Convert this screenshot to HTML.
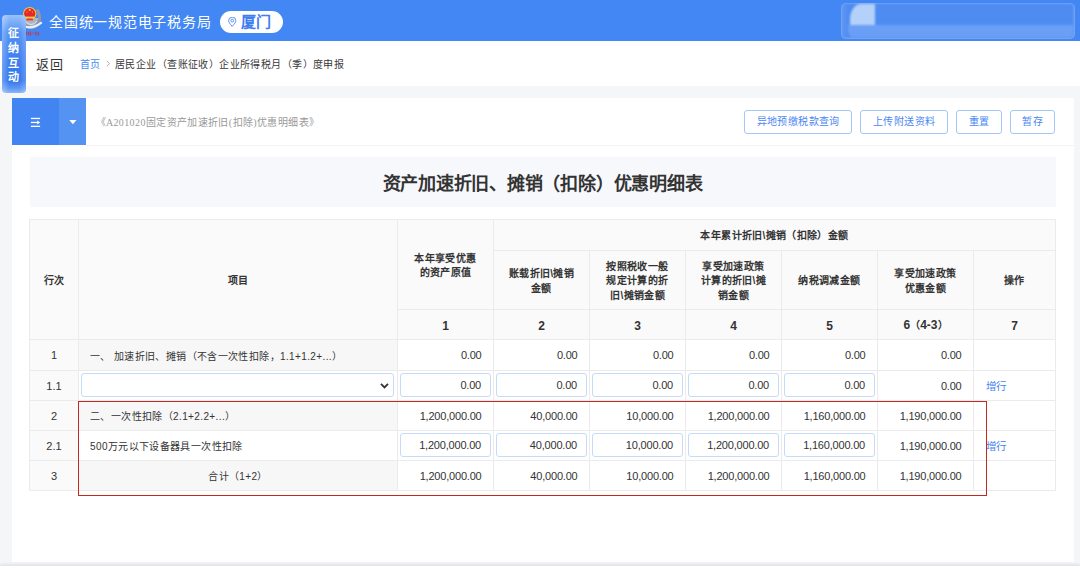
<!DOCTYPE html>
<html lang="zh-CN">
<head>
<meta charset="utf-8">
<style>
*{box-sizing:border-box;margin:0;padding:0}
html,body{width:1080px;height:570px;overflow:hidden}
body{position:relative;background:#f5f6f8;font-family:"Liberation Sans",sans-serif;color:#333}
.abs{position:absolute}
#hdr{left:0;top:0;width:1080px;height:41px;background:#4287f4}
#title{left:49px;top:12px;font-size:14px;letter-spacing:0.75px;line-height:20px;color:#fff;white-space:nowrap}
#pill{left:220px;top:11px;width:63px;height:22px;border-radius:11px;background:#fff}
#pill span{position:absolute;left:21px;top:1px;font-size:15px;line-height:20px;color:#3f7ef0;font-weight:bold}
#blur{left:841px;top:3px;width:234px;height:35.5px;border-radius:5px;background:#5d95f3;overflow:hidden;box-shadow:inset 0 0 2px 1px rgba(150,190,250,.55)}
#blur .in{position:absolute;left:0;top:0;right:0;bottom:0;filter:blur(0.8px)}
#blur .up{position:absolute;left:3px;top:1px;right:2px;height:21px;background:#4f8cf1}
#blur .ls{position:absolute;left:2px;top:2px;width:7px;bottom:2px;background:linear-gradient(90deg,#5d95f3,#4a88f1)}
#blur .lo{position:absolute;left:7px;top:22px;right:2px;height:12px;background:#6a9ff5;border-bottom-left-radius:6px}
#blur .sq{position:absolute;left:9px;top:1px;width:25px;height:21px;background:#b4d1f9;border-top-left-radius:11px 15px}
#bc{left:0;top:41px;width:1080px;height:45px;background:#fff}
#back{left:36px;top:56px;font-size:13px;letter-spacing:0.8px;line-height:18px;color:#333}
#crumb{left:80px;top:57px;font-size:10px;letter-spacing:0.42px;line-height:16px;color:#333;white-space:nowrap}
#crumb .home{color:#4589f3}
#crumb2{left:115px;top:57px;font-size:10px;letter-spacing:0.42px;line-height:16px;color:#3a3a3a;white-space:nowrap}
#badge{left:2px;top:15px;width:24px;height:78px;border-radius:4px;background:linear-gradient(90deg,rgba(255,255,255,.3) 0,rgba(255,255,255,0) 30%,rgba(255,255,255,0) 72%,rgba(255,255,255,.22) 100%),linear-gradient(180deg,#98c2f8 0%,#5291f3 22%,#3f80f0 55%,#3276ee 84%,#5e98f3 94%,#8ab6f6 100%)}
#badge span{position:absolute;left:5.5px;top:11px;width:11px;font-size:11px;line-height:14.8px;color:#fff;font-weight:bold}
#panel{left:12px;top:98px;width:1061.5px;height:464px;background:#fff}
#tabA{left:12px;top:98px;width:47px;height:47px;background:#4284f1}
#tabB{left:59px;top:98px;width:27px;height:47px;background:#5593f3}
#tabline{left:86px;top:145px;width:988px;height:1px;background:#f3f3f3}
#doc{left:95.5px;top:114.5px;font-size:10px;letter-spacing:0.38px;line-height:16px;color:#999;white-space:nowrap;font-family:"Liberation Serif",serif}
.btn{height:23.5px;top:110px;border:1px solid #a6c6f7;border-radius:3px;background:#fff;color:#4a87f2;font-size:10px;letter-spacing:0.4px;text-indent:0.4px;line-height:21.5px;text-align:center;white-space:nowrap}
#ttlbg{left:30px;top:157px;width:1025.5px;height:50px;background:#f7f8fc}
#ttl{left:30px;top:173px;width:1025px;text-align:center;font-size:18px;letter-spacing:-0.235px;line-height:22px;font-weight:bold;color:#333}
#red{left:77.5px;top:400.5px;width:909px;height:95px;border:1.6px solid #c2291f}
#foot{left:0;top:566px;width:1080px;height:4px;background:#fff;box-shadow:0 -1.5px 3px rgba(200,200,218,.55)}
/*TBLCSS*/
.c{position:absolute;border:1px solid #ebebeb;display:flex;align-items:center;justify-content:center}
.th{position:relative;top:1.5px;font-size:10px;letter-spacing:0.35px;line-height:14.5px;font-weight:bold;color:#333;text-align:center;white-space:nowrap}
.thn{font-size:12px;letter-spacing:0;padding-top:3px;top:0}
.rn{font-size:11px;color:#333;line-height:14px}
.num{position:absolute;right:11.5px;top:0;bottom:0;display:flex;align-items:center;font-size:11px;letter-spacing:-0.2px;color:#333;white-space:nowrap}
.inp{position:absolute;left:2px;right:2.5px;top:2px;bottom:3px;border:1px solid #c5dbf8;border-radius:3px;background:#fff}
.inp span{position:absolute;right:8.5px;top:0;bottom:0;display:flex;align-items:center;font-size:11px;letter-spacing:-0.2px;color:#333;white-space:nowrap}
.txt{position:absolute;left:11px;top:0;bottom:0;display:flex;align-items:center;font-size:10px;letter-spacing:0.38px;color:#333;white-space:nowrap}
.txt.ctr{left:0;right:0;justify-content:center}
.sel{position:absolute;left:2px;right:3px;top:2px;bottom:3px;border:1px solid #c5dbf8;border-radius:3px;background:#fff}
.sel svg{position:absolute;right:4.5px;top:9px}
.add{position:absolute;left:12px;top:0;bottom:0;display:flex;align-items:center;font-size:10.5px;color:#3f7ef0}
/*END*/
</style>
</head>
<body>
<div id="hdr" class="abs"></div>
<svg class="abs" style="left:16px;top:2px" width="30" height="38" viewBox="16 2 30 38">
<path d="M22.5 17 Q24 26.5 31 27.5 Q37.5 28 39.5 20 Q40 14 37 9.5" fill="none" stroke="#8f98aa" stroke-width="3"/>
<path d="M23.5 18 Q25.5 25.5 31 26 Q36.5 26 38.6 18 Z" fill="#aeb5c3"/><path d="M25 21 Q28 24.5 31 24.5 Q35 24.5 37 21" fill="none" stroke="#dfe3ea" stroke-width="1"/>
<circle cx="29.7" cy="13.8" r="6.8" fill="#f2c53c"/>
<circle cx="29.7" cy="13.6" r="5.6" fill="#e7262b"/>
<rect x="25.3" y="16.6" width="8.8" height="2" fill="#f5c94c"/>
<rect x="26.3" y="18.8" width="6.8" height="1.6" fill="#e0383a"/>
<circle cx="29.7" cy="10" r="1.1" fill="#f5d050"/>
<circle cx="27" cy="12" r="0.6" fill="#f5d050"/><circle cx="32.4" cy="12" r="0.6" fill="#f5d050"/>
<path d="M25.5 26.8 Q33 29 41.8 22.3" fill="none" stroke="#eef1f7" stroke-width="2.2"/>
<path d="M26.3 31.5 v4 M28 32 l1 3 M30.5 31.5 v4 M32.5 33 h2 M36 31.5 v4 M38 32 q1 2 0.5 3.5" fill="none" stroke="#c93446" stroke-width="1.1"/>
</svg>
<div id="title" class="abs">全国统一规范电子税务局</div>
<div id="pill" class="abs"><svg style="position:absolute;left:8px;top:6px" width="9" height="10" viewBox="0 0 9 10"><path d="M4.2 9.4 C2 6.8 0.6 5.3 0.6 3.7 A3.6 3.6 0 0 1 7.8 3.7 C7.8 5.3 6.4 6.8 4.2 9.4 Z" fill="none" stroke="#4a87f2" stroke-width="0.9"/><circle cx="4.2" cy="3.6" r="1.4" fill="none" stroke="#4a87f2" stroke-width="0.9"/></svg><span>厦门</span></div>
<div id="blur" class="abs"><div class="in"><div class="up"></div><div class="ls"></div><div class="lo"></div><div class="sq"></div></div></div>
<div id="bc" class="abs"></div>
<div id="back" class="abs">返回</div>
<div id="crumb" class="abs"><span class="home">首页</span></div><svg class="abs" style="left:100px;top:55px" width="20" height="16" viewBox="100 55 20 16"><polyline points="106.9,61 109.6,63.6 106.9,66.2" fill="none" stroke="#b3b3b3" stroke-width="1"/></svg><div id="crumb2" class="abs">居民企业（查账征收）企业所得税月（季）度申报</div>
<div id="panel" class="abs"></div>
<div id="tabA" class="abs"></div>
<div id="tabB" class="abs"></div>
<div id="tabline" class="abs"></div>
<svg class="abs" style="left:0;top:0" width="90" height="146" viewBox="0 0 90 146">
<rect x="30.9" y="117.8" width="9.2" height="1.3" fill="#fff"/>
<rect x="30.9" y="121.8" width="6.8" height="1.3" fill="#fff"/>
<polygon points="37.2,120.4 40.2,122.45 37.2,124.5" fill="#fff"/>
<rect x="30.9" y="125.7" width="9.2" height="1.3" fill="#fff"/>
<polygon points="69.3,120 76.5,120 72.9,124.2" fill="#fff"/>
</svg>
<div id="doc" class="abs">《A201020固定资产加速折旧(扣除)优惠明细表》</div>
<div class="abs btn" style="left:744px;width:108px">异地预缴税款查询</div>
<div class="abs btn" style="left:860px;width:88px">上传附送资料</div>
<div class="abs btn" style="left:956px;width:46px">重置</div>
<div class="abs btn" style="left:1010px;width:45px">暂存</div>
<div id="ttlbg" class="abs"></div>
<div id="ttl" class="abs">资产加速折旧、摊销（扣除）优惠明细表</div>
<div id="badge" class="abs"><span>征纳互动</span></div>
<!--TBL-->
<div class="c " style="left:29px;top:219px;width:50px;height:121px;background:#fafafa"><div class="th">行次</div></div>
<div class="c " style="left:78px;top:219px;width:320px;height:121px;background:#fafafa"><div class="th">项目</div></div>
<div class="c " style="left:397px;top:219px;width:97px;height:91px;background:#fafafa"><div class="th">本年享受优惠<br>的资产原值</div></div>
<div class="c " style="left:493px;top:219px;width:563px;height:32px;background:#fafafa"><div class="th">本年累计折旧\摊销（扣除）金额</div></div>
<div class="c " style="left:493px;top:250px;width:97px;height:60px;background:#fafafa"><div class="th">账载折旧\摊销<br>金额</div></div>
<div class="c " style="left:589px;top:250px;width:97px;height:60px;background:#fafafa"><div class="th">按照税收一般<br>规定计算的折<br>旧\摊销金额</div></div>
<div class="c " style="left:685px;top:250px;width:97px;height:60px;background:#fafafa"><div class="th">享受加速政策<br>计算的折旧\摊<br>销金额</div></div>
<div class="c " style="left:781px;top:250px;width:97px;height:60px;background:#fafafa"><div class="th">纳税调减金额</div></div>
<div class="c " style="left:877px;top:250px;width:97px;height:60px;background:#fafafa"><div class="th">享受加速政策<br>优惠金额</div></div>
<div class="c " style="left:973px;top:250px;width:83px;height:60px;background:#fafafa"><div class="th">操作</div></div>
<div class="c " style="left:397px;top:309px;width:97px;height:31px;background:#fafafa"><div class="th thn">1</div></div>
<div class="c " style="left:493px;top:309px;width:97px;height:31px;background:#fafafa"><div class="th thn">2</div></div>
<div class="c " style="left:589px;top:309px;width:97px;height:31px;background:#fafafa"><div class="th thn">3</div></div>
<div class="c " style="left:685px;top:309px;width:97px;height:31px;background:#fafafa"><div class="th thn">4</div></div>
<div class="c " style="left:781px;top:309px;width:97px;height:31px;background:#fafafa"><div class="th thn">5</div></div>
<div class="c " style="left:877px;top:309px;width:97px;height:31px;background:#fafafa"><div class="th thn">6<span style="font-size:10px">（</span>4-3<span style="font-size:10px">）</span></div></div>
<div class="c " style="left:973px;top:309px;width:83px;height:31px;background:#fafafa"><div class="th thn">7</div></div>
<div class="c " style="left:29px;top:339px;width:50px;height:32px;background:#fafafa"><div class="rn">1</div></div>
<div class="c " style="left:78px;top:339px;width:320px;height:32px;background:#f7f7f7"><div class="txt" >一、 加速折旧、摊销（不含一次性扣除，1.1+1.2+...）</div></div>
<div class="c " style="left:397px;top:339px;width:97px;height:32px;background:#fff"><div class="num">0.00</div></div>
<div class="c " style="left:493px;top:339px;width:97px;height:32px;background:#fff"><div class="num">0.00</div></div>
<div class="c " style="left:589px;top:339px;width:97px;height:32px;background:#fff"><div class="num">0.00</div></div>
<div class="c " style="left:685px;top:339px;width:97px;height:32px;background:#fff"><div class="num">0.00</div></div>
<div class="c " style="left:781px;top:339px;width:97px;height:32px;background:#fff"><div class="num">0.00</div></div>
<div class="c " style="left:877px;top:339px;width:97px;height:32px;background:#fff"><div class="num">0.00</div></div>
<div class="c " style="left:973px;top:339px;width:83px;height:32px;background:#fff"></div>
<div class="c " style="left:29px;top:370px;width:50px;height:31px;background:#fafafa"><div class="rn">1.1</div></div>
<div class="c " style="left:78px;top:370px;width:320px;height:31px;background:#fff"><div class="sel"><svg width="9" height="6" viewBox="0 0 9 6"><path d="M1 0.9 L4.5 4.4 L8 0.9" fill="none" stroke="#333" stroke-width="1.8"/></svg></div></div>
<div class="c " style="left:397px;top:370px;width:97px;height:31px;background:#fff"><div class="inp"><span>0.00</span></div></div>
<div class="c " style="left:493px;top:370px;width:97px;height:31px;background:#fff"><div class="inp"><span>0.00</span></div></div>
<div class="c " style="left:589px;top:370px;width:97px;height:31px;background:#fff"><div class="inp"><span>0.00</span></div></div>
<div class="c " style="left:685px;top:370px;width:97px;height:31px;background:#fff"><div class="inp"><span>0.00</span></div></div>
<div class="c " style="left:781px;top:370px;width:97px;height:31px;background:#fff"><div class="inp"><span>0.00</span></div></div>
<div class="c " style="left:877px;top:370px;width:97px;height:31px;background:#fff"><div class="num">0.00</div></div>
<div class="c " style="left:973px;top:370px;width:83px;height:31px;background:#fff"><div class="add">增行</div></div>
<div class="c " style="left:29px;top:400px;width:50px;height:31px;background:#fafafa"><div class="rn">2</div></div>
<div class="c " style="left:78px;top:400px;width:320px;height:31px;background:#f7f7f7"><div class="txt" >二、一次性扣除（2.1+2.2+...）</div></div>
<div class="c " style="left:397px;top:400px;width:97px;height:31px;background:#fff"><div class="num">1,200,000.00</div></div>
<div class="c " style="left:493px;top:400px;width:97px;height:31px;background:#fff"><div class="num">40,000.00</div></div>
<div class="c " style="left:589px;top:400px;width:97px;height:31px;background:#fff"><div class="num">10,000.00</div></div>
<div class="c " style="left:685px;top:400px;width:97px;height:31px;background:#fff"><div class="num">1,200,000.00</div></div>
<div class="c " style="left:781px;top:400px;width:97px;height:31px;background:#fff"><div class="num">1,160,000.00</div></div>
<div class="c " style="left:877px;top:400px;width:97px;height:31px;background:#fff"><div class="num">1,190,000.00</div></div>
<div class="c " style="left:973px;top:400px;width:83px;height:31px;background:#fff"></div>
<div class="c " style="left:29px;top:430px;width:50px;height:31px;background:#fafafa"><div class="rn">2.1</div></div>
<div class="c " style="left:78px;top:430px;width:320px;height:31px;background:#fff"><div class="txt" >500万元以下设备器具一次性扣除</div></div>
<div class="c " style="left:397px;top:430px;width:97px;height:31px;background:#fff"><div class="inp"><span>1,200,000.00</span></div></div>
<div class="c " style="left:493px;top:430px;width:97px;height:31px;background:#fff"><div class="inp"><span>40,000.00</span></div></div>
<div class="c " style="left:589px;top:430px;width:97px;height:31px;background:#fff"><div class="inp"><span>10,000.00</span></div></div>
<div class="c " style="left:685px;top:430px;width:97px;height:31px;background:#fff"><div class="inp"><span>1,200,000.00</span></div></div>
<div class="c " style="left:781px;top:430px;width:97px;height:31px;background:#fff"><div class="inp"><span>1,160,000.00</span></div></div>
<div class="c " style="left:877px;top:430px;width:97px;height:31px;background:#fff"><div class="num">1,190,000.00</div></div>
<div class="c " style="left:973px;top:430px;width:83px;height:31px;background:#fff"><div class="add">增行</div></div>
<div class="c " style="left:29px;top:460px;width:50px;height:31px;background:#fafafa"><div class="rn">3</div></div>
<div class="c " style="left:78px;top:460px;width:320px;height:31px;background:#f7f7f7"><div class="txt ctr">合计（1+2）</div></div>
<div class="c " style="left:397px;top:460px;width:97px;height:31px;background:#fff"><div class="num">1,200,000.00</div></div>
<div class="c " style="left:493px;top:460px;width:97px;height:31px;background:#fff"><div class="num">40,000.00</div></div>
<div class="c " style="left:589px;top:460px;width:97px;height:31px;background:#fff"><div class="num">10,000.00</div></div>
<div class="c " style="left:685px;top:460px;width:97px;height:31px;background:#fff"><div class="num">1,200,000.00</div></div>
<div class="c " style="left:781px;top:460px;width:97px;height:31px;background:#fff"><div class="num">1,160,000.00</div></div>
<div class="c " style="left:877px;top:460px;width:97px;height:31px;background:#fff"><div class="num">1,190,000.00</div></div>
<div class="c " style="left:973px;top:460px;width:83px;height:31px;background:#fff"></div>
<!--END-->
<div id="red" class="abs"></div>
<div id="foot" class="abs"></div>
</body>
</html>
